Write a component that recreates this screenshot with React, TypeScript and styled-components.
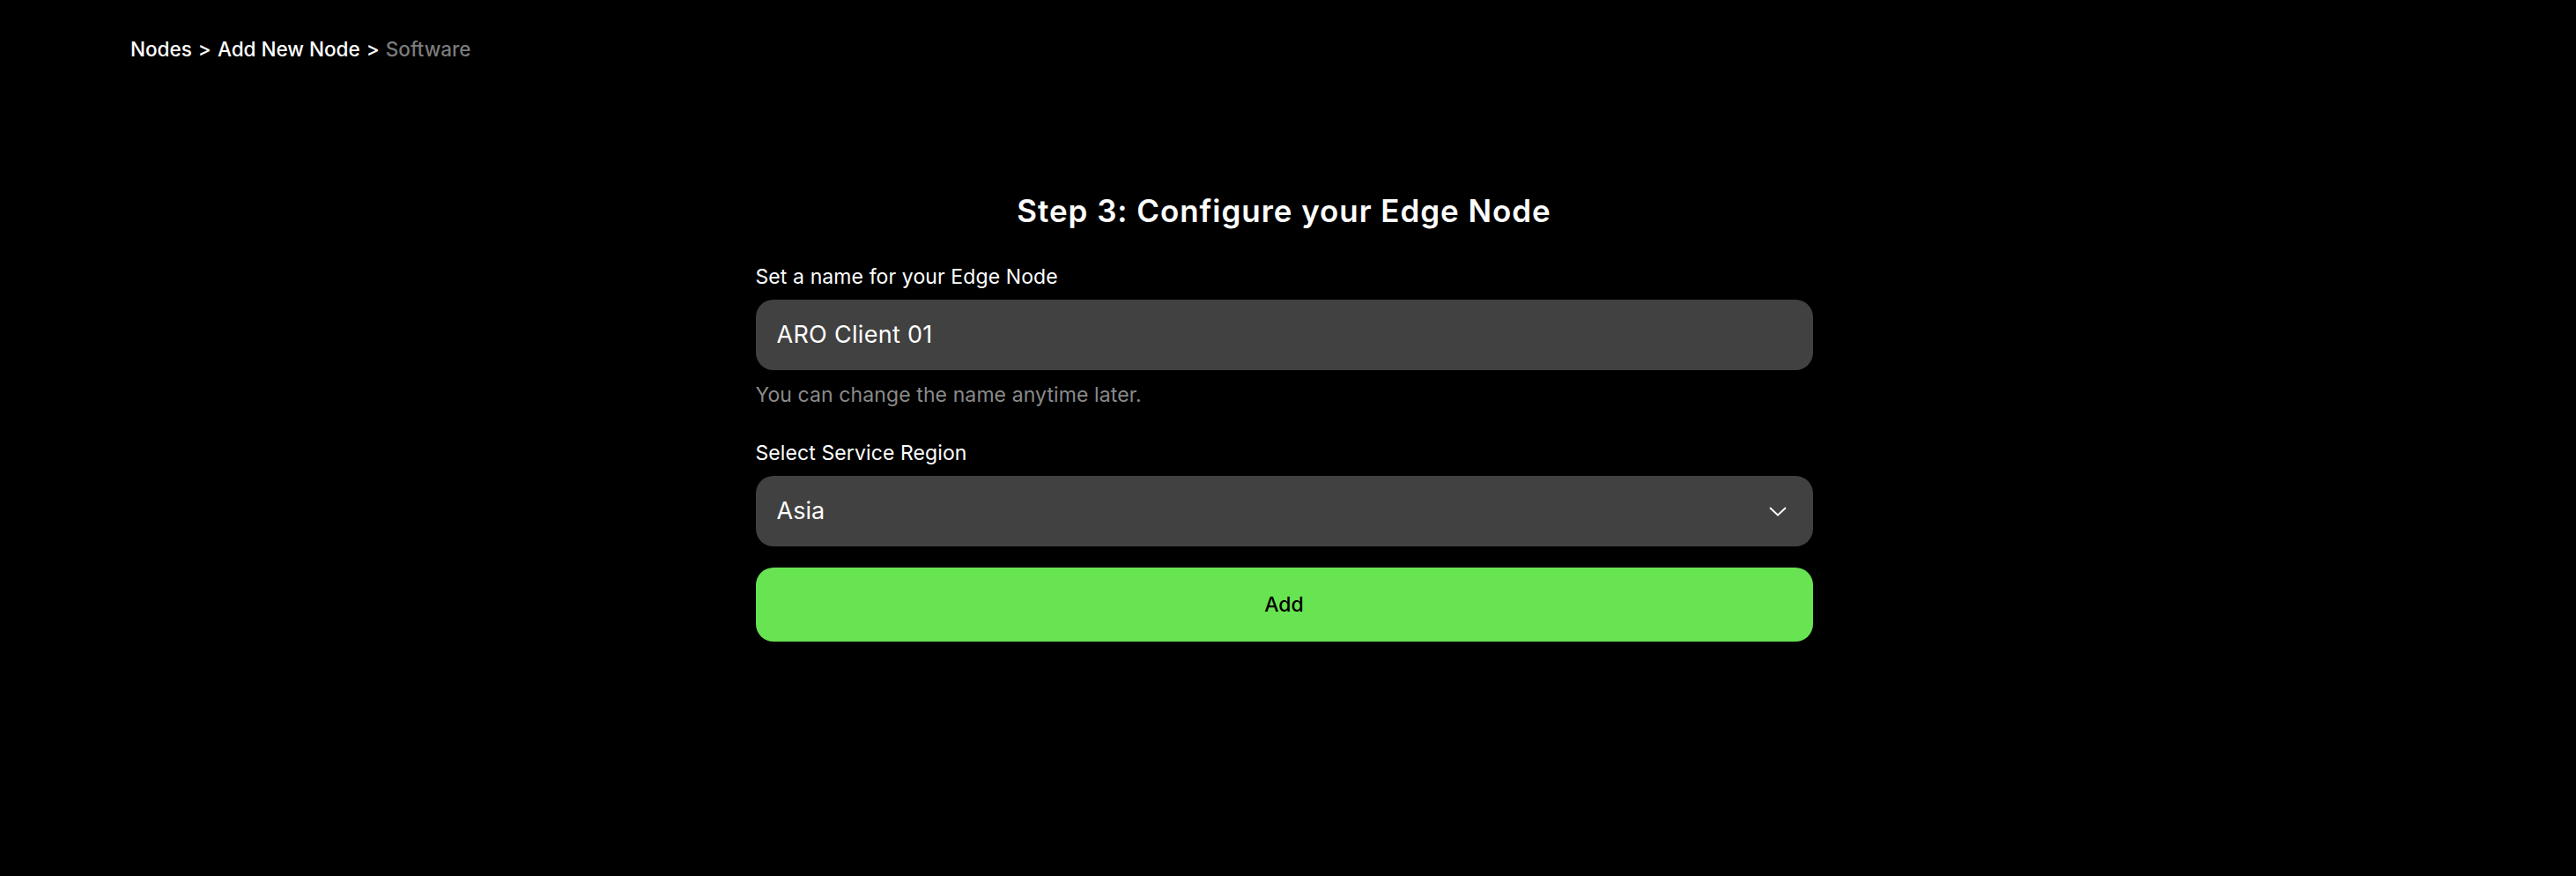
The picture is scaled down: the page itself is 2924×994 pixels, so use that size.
import React, { useState } from "react";
import styled, { createGlobalStyle } from "styled-components";

const GlobalStyle = createGlobalStyle`
  html, body {
    margin: 0;
    padding: 0;
    background: #000;
  }
  body {
    font-family: "Inter", "Noto Sans", sans-serif;
    color: #fff;
    -webkit-font-smoothing: antialiased;
  }
`;

const Page = styled.main`
  min-height: 994px;
  box-sizing: border-box;
  padding: 40px 157px 0 148px;
  background: #000;
`;

const Breadcrumb = styled.nav`
  display: flex;
  align-items: center;
  gap: 7px;
  font-size: 22.5px;
  line-height: 32px;
  font-weight: 500;
  letter-spacing: 0;
`;

const Crumb = styled.span<{ $current?: boolean }>`
  color: ${props => (props.$current ? "#7b7b7b" : "#fff")};
`;

const Separator = styled.span`
  color: #fff;
`;

const Form = styled.section`
  width: 1200px;
  margin: 145px auto 0;
  display: flex;
  flex-direction: column;
`;

const Title = styled.h1`
  margin: 0 0 39px;
  text-align: center;
  font-family: "Inter", "Open Sans", sans-serif;
  font-size: 35px;
  line-height: 44px;
  font-weight: 600;
  letter-spacing: 0.95px;
  color: #fff;
`;

const Label = styled.label<{ $spaced?: boolean }>`
  display: block;
  margin-top: ${props => (props.$spaced ? "38px" : "0")};
  font-size: 23px;
  line-height: 28px;
  font-weight: 400;
  letter-spacing: 0.1px;
  color: #fff;
`;

const Field = styled.div`
  box-sizing: border-box;
  height: 80px;
  margin-top: 12px;
  padding: 0 30px 0 24px;
  display: flex;
  align-items: center;
  justify-content: space-between;
  background: #414141;
  border-radius: 20px;
`;

const TextInput = styled.input`
  flex: 1;
  min-width: 0;
  border: none;
  outline: none;
  background: transparent;
  padding: 0;
  font-family: inherit;
  font-size: 27px;
  line-height: 36px;
  letter-spacing: 0.3px;
  color: #fff;
`;

const SelectValue = styled.span`
  font-size: 27px;
  line-height: 36px;
  color: #fff;
`;

const Hint = styled.p`
  margin: 14px 0 0;
  font-size: 23px;
  line-height: 28px;
  letter-spacing: 0.1px;
  color: #8a8a8a;
`;

const AddButton = styled.button`
  height: 84px;
  margin-top: 24px;
  border: none;
  border-radius: 20px;
  background: #68e352;
  color: #000;
  font-family: inherit;
  font-size: 23px;
  font-weight: 500;
  cursor: pointer;
`;

const Chevron = () => (
  <svg width="20" height="11" viewBox="0 0 20 11" fill="none">
    <polyline points="1.5,1.5 10,9.5 18.5,1.5" stroke="#fff" strokeWidth="1.8" strokeLinecap="round" strokeLinejoin="round" />
  </svg>
);

export default function App() {
  const [name, setName] = useState("ARO Client 01");

  return (
    <>
      <GlobalStyle />
      <Page>
        <Breadcrumb>
          <Crumb>Nodes</Crumb>
          <Separator>&gt;</Separator>
          <Crumb>Add New Node</Crumb>
          <Separator>&gt;</Separator>
          <Crumb $current>Software</Crumb>
        </Breadcrumb>

        <Form>
          <Title>Step 3: Configure your Edge Node</Title>

          <Label htmlFor="node-name">Set a name for your Edge Node</Label>
          <Field>
            <TextInput id="node-name" value={name} onChange={e => setName(e.target.value)} />
          </Field>
          <Hint>You can change the name anytime later.</Hint>

          <Label $spaced>Select Service Region</Label>
          <Field role="combobox">
            <SelectValue>Asia</SelectValue>
            <Chevron />
          </Field>

          <AddButton>Add</AddButton>
        </Form>
      </Page>
    </>
  );
}
